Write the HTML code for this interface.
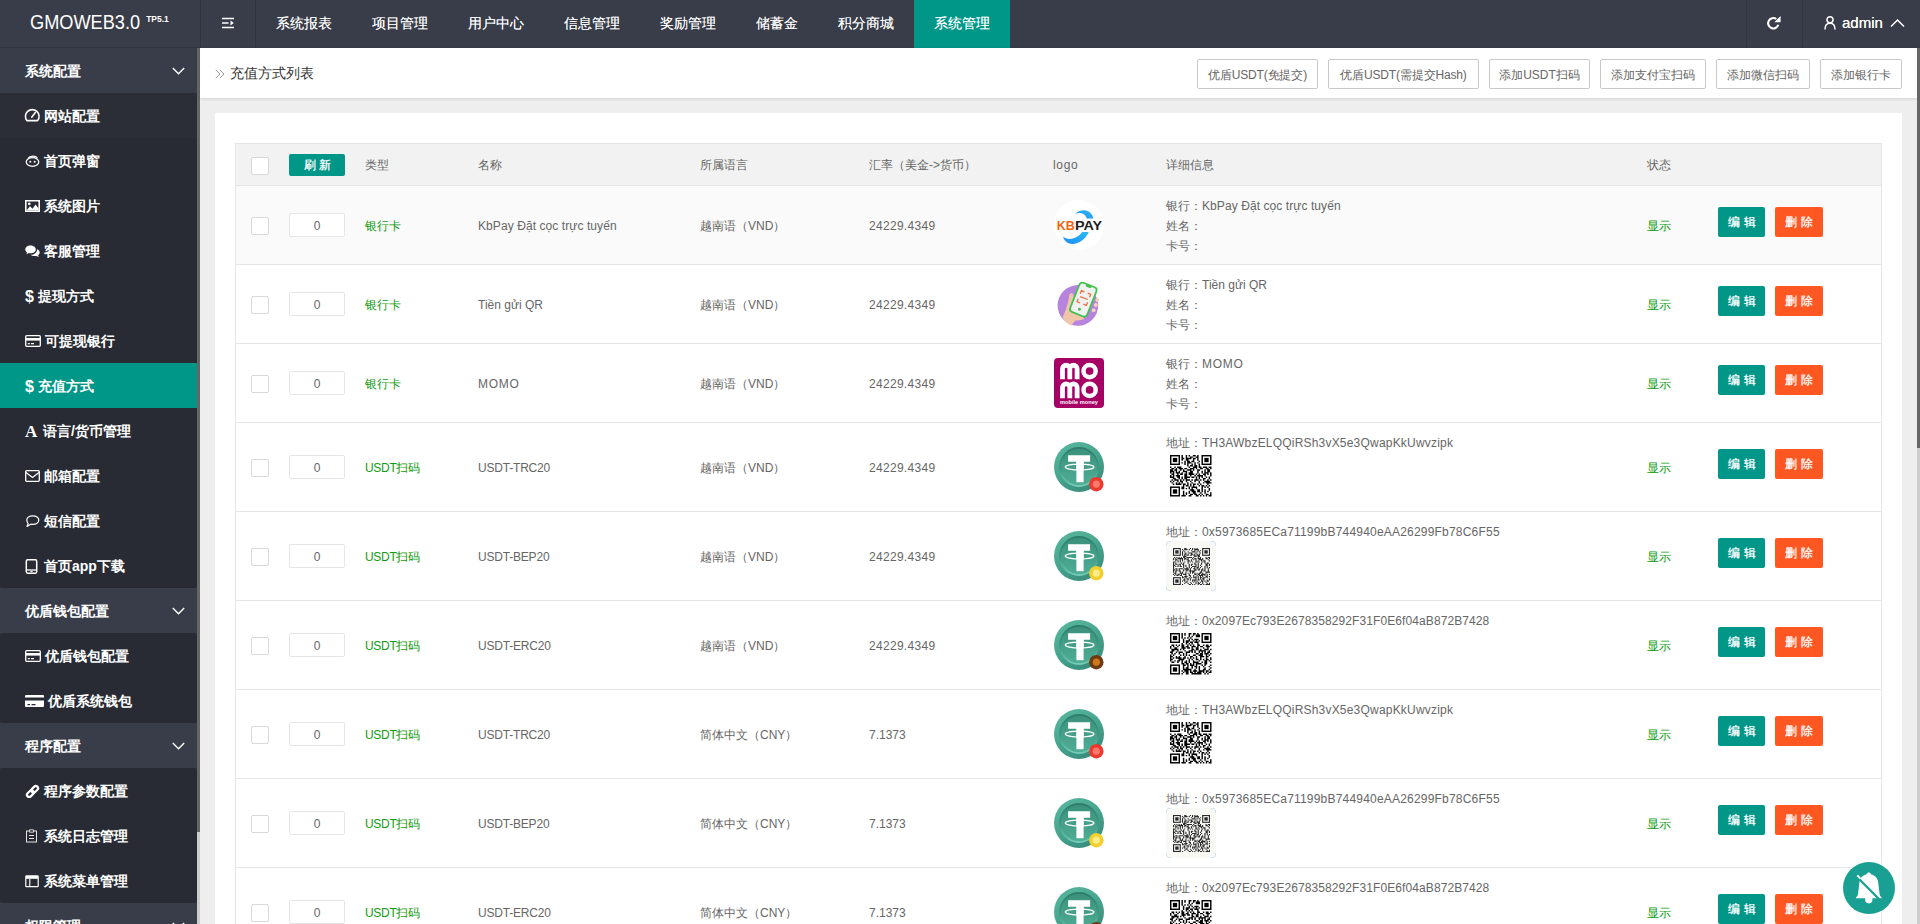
<!DOCTYPE html>
<html lang="zh">
<head>
<meta charset="utf-8">
<title>GMOWEB3.0</title>
<style>
*{box-sizing:border-box;margin:0;padding:0}
html,body{width:1920px;height:924px;overflow:hidden;background:#eee;font-family:"Liberation Sans",sans-serif;font-size:14px;color:#666}
.abs{position:absolute}
#hdr{position:absolute;left:0;top:0;width:1920px;height:48px;background:#393d49}
#logo{position:absolute;left:30px;top:7px;height:30px;line-height:30px;color:#fff;font-size:20.500px;white-space:nowrap;transform:scaleX(.887);transform-origin:0 0}
#logo sup{position:absolute;left:131px;top:-3px;font-size:9.500px;font-weight:bold;letter-spacing:0}
.vdiv{position:absolute;top:0;width:1px;height:48px;background:#30343f}
.nav{position:absolute;top:0;height:48px;line-height:47px;color:#fff;font-size:14px;text-align:center;white-space:nowrap;text-shadow:0 0 .5px rgba(255,255,255,.7)}
.nav.on{background:#009688}
#side{position:absolute;left:0;top:48px;width:197px;height:876px;background:#393d49;overflow:hidden}
#sbar{position:absolute;left:197px;top:48px;width:3px;height:876px;background:#ccc}
#sbar i{position:absolute;left:0;top:0;width:3px;height:784px;background:#666}
.grp{position:relative;height:45px;line-height:47px;color:#fff;font-size:14px;padding-left:25px;background:#393d49;font-weight:bold}
.grp svg{position:absolute;left:172px;top:19px}
.sub{background:#282b33;border-radius:2px}
.it{position:relative;height:45px;line-height:47px;color:#fff;font-size:14px;font-weight:bold;white-space:nowrap}
.it.on{background:#009688}
.it span{position:absolute;top:0}
.it svg{position:absolute;left:25px;top:16px}
#sub{position:absolute;left:200px;top:48px;width:1717px;height:50px;background:#fff;box-shadow:0 1px 3px rgba(0,0,0,.12)}
#crumb{position:absolute;left:30px;top:0;line-height:50px;font-size:14px;color:#333}
.tb{position:absolute;top:11px;height:30px;line-height:30px;border:1px solid #c9c9c9;border-radius:2px;background:#fff;color:#666;font-size:12px;text-align:center;white-space:nowrap}
#card{position:absolute;left:215px;top:113px;width:1687px;height:900px;background:#fff}
#tbl{position:absolute;left:20px;top:30px;width:1647px;border:1px solid #e6e6e6;border-bottom:0;font-size:12px;color:#666}
.row{position:relative;width:1645px;border-bottom:1px solid #e6e6e6;background:#fff}
.row.h{height:42px;background:#f2f2f2}
.row.b{height:79px}
.row.u{height:89px}
.row.hov{background:#fafafa}
.c{position:absolute;white-space:nowrap;line-height:20px}
.ck{position:absolute;left:15px;width:18px;height:18px;border:1px solid #d8d8d8;border-radius:2px;background:#fff}
.inp{position:absolute;left:53px;width:56px;height:24px;line-height:24px;border:1px solid #e6e6e6;border-radius:2px;background:#fff;text-align:center;color:#666}
.g{color:#109c10}
.l{letter-spacing:.22px}
.btn{position:absolute;height:30px;line-height:30px;border-radius:2px;color:#fff;font-size:12px;text-align:center;letter-spacing:4px;padding-left:4px;text-shadow:0 0 .7px rgba(255,255,255,.9)}
.be{left:1482px;width:47px;background:#009688}
.bd{left:1539px;width:48px;background:#ff5722}
#vs{position:absolute;left:1917px;top:48px;width:3px;height:876px;background:#ccc}
#vs i{position:absolute;left:0;top:0;width:3px;height:400px;background:#666}
#bell{position:absolute;left:1843px;top:862px;width:52px;height:52px;border-radius:50%;background:#19a092}
</style>
</head>
<body>
<div id="hdr">
  <div id="logo">GMOWEB3.0<sup>TP5.1</sup></div>
  <div class="abs" style="left:0;top:47px;width:200px;height:1px;background:#30343f"></div>
  <div class="vdiv" style="left:200px"></div>
  <div class="vdiv" style="left:255px"></div>
  <div class="vdiv" style="left:1746px"></div>
  <div class="vdiv" style="left:1802px"></div>
  <svg class="abs" style="left:221px;top:16px" width="14" height="14" viewBox="0 0 14 14"><path d="M1 2.5h12M1 7h6.5M1 11.5h12" stroke="#fff" stroke-width="1.6" fill="none"/><path d="M9.5 4.6L12.8 7L9.5 9.4z" fill="#fff"/></svg>
  <div class="nav" style="left:256px;width:96px">系统报表</div>
  <div class="nav" style="left:352px;width:96px">项目管理</div>
  <div class="nav" style="left:448px;width:96px">用户中心</div>
  <div class="nav" style="left:544px;width:96px">信息管理</div>
  <div class="nav" style="left:640px;width:96px">奖励管理</div>
  <div class="nav" style="left:736px;width:82px">储蓄金</div>
  <div class="nav" style="left:818px;width:96px">积分商城</div>
  <div class="nav on" style="left:914px;width:96px">系统管理</div>
  <svg class="abs" style="left:1766px;top:15px" width="16" height="16" viewBox="0 0 16 16"><path d="M12.300 9.800A5.200 5.200 0 1 1 10.300 4" stroke="#fff" stroke-width="2.100" fill="none"/><path d="M14.600 1v6.300H8.300z" fill="#fff"/></svg>
  <svg class="abs" style="left:1823px;top:15px" width="14" height="16" viewBox="0 0 14 16"><circle cx="7" cy="4.700" r="3" stroke="#fff" stroke-width="1.500" fill="none"/><path d="M2 14.500c0-3.800 2-6.200 5-6.200s5 2.400 5 6.200" stroke="#fff" stroke-width="1.500" fill="none"/></svg>
  <div class="nav" style="left:1842px;font-size:15px;line-height:45px;text-shadow:0 0 .6px #fff">admin</div>
  <svg class="abs" style="left:1890px;top:18px" width="15" height="10" viewBox="0 0 15 10"><path d="M1 8.500L7.500 2L14 8.500" stroke="#fff" stroke-width="1.5" fill="none"/></svg>
</div>

<div id="side">
<div class="grp">系统配置<svg width="13" height="8" viewBox="0 0 13 8"><path d="M.8 1l5.700 5.700L12.200 1" stroke="#fff" stroke-width="1.400" fill="none"/></svg></div>
<div class="sub">
<div class="it" style="background:#2b2e37"><svg width="16.500" height="15.400" viewBox="0 0 15 14" style="top:14px;left:24px"><path d="M2.600 12.400A6.200 6.200 0 1 1 12.400 12.400z" stroke="#fff" stroke-width="1.400" fill="none" stroke-linejoin="round"/><path d="M7 9.300L10.300 5" stroke="#fff" stroke-width="1.400" stroke-linecap="round"/></svg><span style="left:44px">网站配置</span></div>
<div class="it"><svg width="15" height="14" viewBox="0 0 15 14"><ellipse cx="7.500" cy="8" rx="6.300" ry="4.300" stroke="#fff" stroke-width="1.200" fill="none"/><path d="M3 4.300C5 1.500 10.500 1.500 12.500 4" stroke="#fff" stroke-width="1.200" fill="none"/><circle cx="5.300" cy="7.800" r="1" fill="#fff"/><circle cx="9.700" cy="7.800" r="1" fill="#fff"/></svg><span style="left:44px">首页弹窗</span></div>
<div class="it"><svg width="15" height="14" viewBox="0 0 15 14"><path d="M.8 1.800h13.400v10.400H.8z" stroke="#fff" stroke-width="1.600" fill="none"/><path d="M1.500 11.500l3.500-4.200 2.500 2.500 3-4.300 3 3.800v2.200z" fill="#fff"/><circle cx="4.300" cy="4.800" r="1.400" fill="#fff"/></svg><span style="left:44px">系统图片</span></div>
<div class="it"><svg width="15" height="14" viewBox="0 0 15 14"><path d="M5.500 1.500c3 0 5.300 1.700 5.300 3.900s-2.300 3.900-5.300 3.900c-.6 0-1.200-.1-1.700-.2L1.300 10.300l.8-2C1 7.600.3 6.600.3 5.400.3 3.200 2.500 1.500 5.500 1.500z" fill="#fff"/><path d="M12 5.200c1.600.6 2.700 1.800 2.700 3.200 0 1.100-.7 2.100-1.700 2.800l.8 1.900-2.600-1.200c-.5.100-1.100.2-1.700.2-1.600 0-3-.5-4-1.300 3.600.2 6.700-2 6.500-5.600z" fill="#fff"/></svg><span style="left:44px">客服管理</span></div>
<div class="it"><span style="left:25px;font-size:16px;font-weight:bold">$</span><span style="left:38px">提现方式</span></div>
<div class="it"><svg width="16" height="14" viewBox="0 0 16 14"><rect x=".7" y="1.700" width="14.600" height="10.600" rx="1" stroke="#fff" stroke-width="1.300" fill="none"/><path d="M1 4h14v2.600H1z" fill="#fff"/><path d="M2.800 9.600h2M6 9.600h3" stroke="#fff" stroke-width="1.200"/></svg><span style="left:45px">可提现银行</span></div>
<div class="it on"><span style="left:25px;font-size:16px;font-weight:bold">$</span><span style="left:38px">充值方式</span></div>
<div class="it"><span style="left:25px;font-family:'Liberation Serif',serif;font-size:17px;font-weight:bold">A</span><span style="left:43px">语言/货币管理</span></div>
<div class="it"><svg width="15" height="14" viewBox="0 0 15 14"><rect x=".7" y="1.700" width="13.600" height="10.600" rx="1" stroke="#fff" stroke-width="1.300" fill="none"/><path d="M1 3.500l6.500 5 6.500-5" stroke="#fff" stroke-width="1.300" fill="none"/></svg><span style="left:44px">邮箱配置</span></div>
<div class="it"><svg width="15" height="14" viewBox="0 0 15 14"><path d="M7.800 1.800c3.400 0 6 1.900 6 4.300s-2.600 4.300-6 4.300c-.7 0-1.400-.1-2-.2L2 12.400l1.200-2.800C2.300 8.800 1.800 7.500 1.800 6.100c0-2.400 2.600-4.300 6-4.300z" stroke="#fff" stroke-width="1.200" fill="none" stroke-linejoin="round"/></svg><span style="left:44px">短信配置</span></div>
<div class="it"><svg width="13" height="15" viewBox="0 0 13 15"><rect x="1.300" y=".8" width="10.400" height="13.400" rx="1.400" stroke="#fff" stroke-width="1.500" fill="none"/><path d="M1.500 11h10" stroke="#fff" stroke-width="1.300"/><path d="M5.300 12.600h2.400" stroke="#fff" stroke-width="1"/></svg><span style="left:44px">首页app下载</span></div>
</div>
<div class="grp">优盾钱包配置<svg width="13" height="8" viewBox="0 0 13 8"><path d="M.8 1l5.700 5.700L12.200 1" stroke="#fff" stroke-width="1.400" fill="none"/></svg></div>
<div class="sub">
<div class="it"><svg width="16" height="14" viewBox="0 0 16 14"><rect x=".7" y="1.700" width="14.600" height="10.600" rx="1" stroke="#fff" stroke-width="1.300" fill="none"/><path d="M1 4h14v2.600H1z" fill="#fff"/><path d="M2.800 9.600h2M6 9.600h3" stroke="#fff" stroke-width="1.200"/></svg><span style="left:45px">优盾钱包配置</span></div>
<div class="it"><svg width="19" height="14" viewBox="0 0 19 14"><path d="M1 1h17a1 1 0 0 1 1 1v1.500H0V2a1 1 0 0 1 1-1zM0 6.500h19V12a1 1 0 0 1-1 1H1a1 1 0 0 1-1-1zM2.500 10h2.500v1.200H2.500zM6.500 10h4v1.200h-4z" fill="#fff" fill-rule="evenodd"/></svg><span style="left:48px">优盾系统钱包</span></div>
</div>
<div class="grp">程序配置<svg width="13" height="8" viewBox="0 0 13 8"><path d="M.8 1l5.700 5.700L12.200 1" stroke="#fff" stroke-width="1.400" fill="none"/></svg></div>
<div class="sub">
<div class="it"><svg width="15" height="15" viewBox="0 0 15 15"><g fill="none" stroke="#fff" stroke-width="2.200" transform="rotate(-45 7.500 7.500)"><rect x=".6" y="5.300" width="7.600" height="4.400" rx="2.200"/><rect x="6.800" y="5.300" width="7.600" height="4.400" rx="2.200"/></g></svg><span style="left:44px">程序参数配置</span></div>
<div class="it"><svg width="13" height="15" viewBox="0 0 13 15"><rect x="1.500" y="2" width="10" height="11" stroke="#e4e4e4" stroke-width="1" fill="none"/><path d="M4.500 .8h4v2.400h-4z" stroke="#e4e4e4" stroke-width=".9" fill="#282b33"/><path d="M4 6.500h5M4 9.500h5" stroke="#e4e4e4" stroke-width="1"/></svg><span style="left:44px">系统日志管理</span></div>
<div class="it"><svg width="14" height="14" viewBox="0 0 14 14"><rect x=".8" y="1.800" width="12.400" height="10.900" rx=".8" stroke="#fff" stroke-width="1.200" fill="none"/><path d="M1 2h12v2.800H1z" fill="#fff"/><path d="M4.800 5v7.500" stroke="#fff" stroke-width="1.100"/></svg><span style="left:44px">系统菜单管理</span></div>
</div>
<div class="grp">权限管理<svg width="13" height="8" viewBox="0 0 13 8"><path d="M.8 1l5.700 5.700L12.200 1" stroke="#fff" stroke-width="1.400" fill="none"/></svg></div>
</div>
<div id="sbar"><i></i></div>

<div id="sub">
  <svg class="abs" style="left:15px;top:21px" width="10" height="10" viewBox="0 0 10 10"><path d="M.8 .8L5 5L.8 9.200M4.800 .8L9 5L4.800 9.200" stroke="#999" stroke-width="1" fill="none"/></svg>
  <div id="crumb">充值方式列表</div>
  <div class="tb" style="left:997px;width:121px;letter-spacing:-.15px">优盾USDT(免提交)</div>
  <div class="tb" style="left:1128px;width:151px;letter-spacing:-.15px">优盾USDT(需提交Hash)</div>
  <div class="tb" style="left:1289px;width:101px">添加USDT扫码</div>
  <div class="tb" style="left:1400px;width:106px">添加支付宝扫码</div>
  <div class="tb" style="left:1516px;width:94px">添加微信扫码</div>
  <div class="tb" style="left:1620px;width:82px">添加银行卡</div>
</div>

<div id="card">
<div id="tbl">
<div class="row h"><div class="ck" style="top:13px"></div><div class="btn" style="left:53px;top:10px;width:56px;height:22px;line-height:22px;background:#009688;letter-spacing:3px;padding-left:3px">刷新</div><div class="c" style="left:129px;top:11px">类型</div><div class="c" style="left:242px;top:11px">名称</div><div class="c" style="left:464px;top:11px">所属语言</div><div class="c" style="left:633px;top:11px">汇率（美金-&gt;货币）</div><div class="c" style="left:817px;top:11px;letter-spacing:.7px">logo</div><div class="c" style="left:930px;top:11px">详细信息</div><div class="c" style="left:1411px;top:11px">状态</div></div>
<div class="row b hov"><div class="ck" style="top:31px"></div><div class="inp" style="top:27px">0</div><div class="c g" style="left:129px;top:30px">银行卡</div><div class="c" style="left:242px;top:30px"><span style="letter-spacing:0.08px">KbPay Đặt cọc trực tuyến</span></div><div class="c" style="left:464px;top:30px">越南语（VND）</div><div class="c" style="left:633px;top:30px"><span style="letter-spacing:0.3px">24229.4349</span></div><div class="abs" style="left:818px;top:14px;width:50px;height:50px"><svg width="50" height="50" viewBox="0 0 50 50"><defs><linearGradient id="kbg" x1="0" y1="1" x2="1" y2="0"><stop offset="0" stop-color="#1c8ef6"/><stop offset="1" stop-color="#2fbaf5"/></linearGradient></defs><circle cx="25" cy="25" r="25" fill="#fff"/><path d="M21 14.200C24.500 10 31.500 9 35.500 12c2.300 1.700 3.500 4 3.800 6.600h-6.600c-.4-2.400-2-4.400-4.500-5.200-2.300-.7-4.800-.3-7.200.8z" fill="url(#kbg)"/><path d="M9 36.500c2.500 2.300 6.500 3 10.500 1.800 3.800-1.100 6.800-3.400 8.700-6.300h6.600c-2 5-6.600 9.500-12.300 11.300-6 1.900-11.800-.4-13.500-6.800z" fill="url(#kbg)"/><text x="2.700" y="30" font-family="Liberation Sans,sans-serif" font-weight="bold" font-size="12.800" fill="#f4660e" textLength="18" lengthAdjust="spacingAndGlyphs">KB</text><text x="21" y="30" font-family="Liberation Sans,sans-serif" font-weight="bold" font-size="12.800" fill="#1c1c1c" textLength="27.200" lengthAdjust="spacingAndGlyphs">PAY</text></svg></div><div class="c" style="left:930px;top:10px">银行：<span style="letter-spacing:0.08px">KbPay Đặt cọc trực tuyến</span><br>姓名：<br>卡号：</div><div class="c g" style="left:1411px;top:30px">显示</div><div class="btn be" style="top:21px">编辑</div><div class="btn bd" style="top:21px">删除</div></div>
<div class="row b"><div class="ck" style="top:31px"></div><div class="inp" style="top:27px">0</div><div class="c g" style="left:129px;top:30px">银行卡</div><div class="c" style="left:242px;top:30px">Tiền gửi QR</div><div class="c" style="left:464px;top:30px">越南语（VND）</div><div class="c" style="left:633px;top:30px"><span style="letter-spacing:0.3px">24229.4349</span></div><div class="abs" style="left:818px;top:14px;width:50px;height:50px"><svg width="50" height="50" viewBox="0 0 50 50"><circle cx="23.900" cy="26.400" r="20.300" fill="#b684dc"/><path d="M15.500 15c1.500-1.200 3.500-.8 4 1l3 16 8 7.500c-2 1.500-6 2-9 2l-4.500 5c-3.500-1.500-6.500-4.500-8.500-8 3-6 5.500-13 7-23.500z" fill="#f1c5aa"/><circle cx="43.300" cy="21" r="1.900" fill="#f6d3bd"/><circle cx="41.800" cy="26" r="1.900" fill="#f6d3bd"/><circle cx="39.700" cy="31.200" r="1.900" fill="#f6d3bd"/><g transform="rotate(21.500 29.300 20.600)"><rect x="19.300" y="4.100" width="20" height="33" rx="4" fill="#3ec24c"/><rect x="21" y="5.800" width="16.600" height="29.600" rx="2.800" fill="#f1f1f1"/><rect x="26.300" y="4.800" width="6" height="2.600" rx="1.300" fill="#3ec24c"/><path d="M24.300 16.200v-3.200h3.200M34.300 16.200v-3.200h-3.200M24.300 21.600v3.200h3.200M34.300 21.600v3.200h-3.200M25.300 18.900h8" stroke="#f0703f" stroke-width="1.300" fill="none"/><circle cx="29.300" cy="31" r="1.500" fill="#3ec24c"/></g></svg></div><div class="c" style="left:930px;top:10px">银行：Tiền gửi QR<br>姓名：<br>卡号：</div><div class="c g" style="left:1411px;top:30px">显示</div><div class="btn be" style="top:21px">编辑</div><div class="btn bd" style="top:21px">删除</div></div>
<div class="row b"><div class="ck" style="top:31px"></div><div class="inp" style="top:27px">0</div><div class="c g" style="left:129px;top:30px">银行卡</div><div class="c" style="left:242px;top:30px"><span style="letter-spacing:0.7px">MOMO</span></div><div class="c" style="left:464px;top:30px">越南语（VND）</div><div class="c" style="left:633px;top:30px"><span style="letter-spacing:0.3px">24229.4349</span></div><div class="abs" style="left:818px;top:14px;width:50px;height:50px"><svg width="50" height="50" viewBox="0 0 50 50"><rect width="50" height="50" rx="4" fill="#a60064"/><path d="M8.500 21.200V10.900a3.650 3.650 0 0 1 7.300 0V21.200M15.800 10.900a3.650 3.650 0 0 1 7.300 0V21.200" stroke="#fff" stroke-width="4.800" fill="none"/><circle cx="35.600" cy="13.100" r="6.100" stroke="#fff" stroke-width="4.500" fill="none"/><path d="M8.500 40.200V29.500a3.650 3.650 0 0 1 7.300 0V40.200M15.800 29.500a3.650 3.650 0 0 1 7.300 0V40.200" stroke="#fff" stroke-width="4.800" fill="none"/><circle cx="35.600" cy="31.900" r="6.100" stroke="#fff" stroke-width="4.500" fill="none"/><text x="6" y="45.600" font-family="Liberation Sans,sans-serif" font-weight="bold" font-size="4.600" fill="#fff" textLength="38" lengthAdjust="spacingAndGlyphs">mobile money</text></svg></div><div class="c" style="left:930px;top:10px">银行：<span style="letter-spacing:0.7px">MOMO</span><br>姓名：<br>卡号：</div><div class="c g" style="left:1411px;top:30px">显示</div><div class="btn be" style="top:21px">编辑</div><div class="btn bd" style="top:21px">删除</div></div>
<div class="row u"><div class="ck" style="top:36px"></div><div class="inp" style="top:32px">0</div><div class="c g" style="left:129px;top:35px"><span style="letter-spacing:-.3px">USDT</span>扫码</div><div class="c" style="left:242px;top:35px"><span style="letter-spacing:-0.2px">USDT-TRC20</span></div><div class="c" style="left:464px;top:35px">越南语（VND）</div><div class="c" style="left:633px;top:35px"><span style="letter-spacing:0.3px">24229.4349</span></div><div class="abs" style="left:818px;top:19px;width:50px;height:50px"><svg width="50" height="50" viewBox="0 0 50 50"><defs><linearGradient id="ugr1" x1=".2" y1="0" x2=".8" y2="1"><stop offset="0" stop-color="#58b69e"/><stop offset=".5" stop-color="#46a48d"/><stop offset="1" stop-color="#36897a"/></linearGradient><linearGradient id="udr1" x1="0" y1="0" x2="0" y2="1"><stop offset="0" stop-color="#3b907b"/><stop offset="1" stop-color="#4fae96"/></linearGradient><linearGradient id="usr1" x1="0" y1="0" x2="0" y2="1"><stop offset="0" stop-color="#2d7f6b"/><stop offset=".55" stop-color="#3f9a84"/><stop offset="1" stop-color="#74cdb6"/></linearGradient></defs><circle cx="25" cy="25" r="25" fill="url(#ugr1)"/><circle cx="25" cy="25" r="19" fill="url(#udr1)" stroke="url(#usr1)" stroke-width="1.800"/><path d="M14.100 13.300h22v6.400h-6.500v20.500h-7.200v-20.500h-8.300z" fill="#fff"/><ellipse cx="25.600" cy="25" rx="14.300" ry="2.900" fill="none" stroke="#fff" stroke-width="1.300"/><path d="M22.400 19h7.200v8.500h-7.200z" fill="#fff"/><circle cx="42.300" cy="42.200" r="7.200" fill="#ee3a2e"/><circle cx="42.300" cy="42.200" r="3.600" fill="#ff8a7a" opacity=".8"/></svg></div><div class="c" style="left:930px;top:10px">地址：<span style="letter-spacing:0.2px">TH3AWbzELQQiRSh3vX5e3QwapKkUwvzipk</span></div><div class="abs" style="left:930px;top:28px;width:50px;height:50px;padding:4.250px"><svg width="41.5" height="41.5" viewBox="0 0 29 29" style="display:block"><path d="M8 0h1v1h-1zM11 0h1v1h-1zM13 0h1v1h-1zM16 0h2v1h-2zM19 0h1v1h-1zM8 1h1v1h-1zM11 1h1v1h-1zM14 1h2v1h-2zM18 1h2v1h-2zM8 2h2v1h-2zM11 2h4v1h-4zM16 2h2v1h-2zM19 2h1v1h-1zM8 3h1v1h-1zM11 3h2v1h-2zM16 3h1v1h-1zM19 3h1v1h-1zM10 4h1v1h-1zM12 4h2v1h-2zM15 4h2v1h-2zM20 4h1v1h-1zM8 5h1v1h-1zM10 5h1v1h-1zM12 5h3v1h-3zM17 5h1v1h-1zM19 5h1v1h-1zM10 6h1v1h-1zM12 6h1v1h-1zM15 6h1v1h-1zM17 6h1v1h-1zM20 6h1v1h-1zM12 7h1v1h-1zM14 7h2v1h-2zM17 7h2v1h-2zM20 7h1v1h-1zM0 8h1v1h-1zM3 8h1v1h-1zM5 8h3v1h-3zM13 8h1v1h-1zM16 8h3v1h-3zM20 8h2v1h-2zM23 8h3v1h-3zM27 8h2v1h-2zM1 9h2v1h-2zM4 9h1v1h-1zM6 9h3v1h-3zM10 9h2v1h-2zM14 9h3v1h-3zM18 9h1v1h-1zM21 9h2v1h-2zM25 9h2v1h-2zM28 9h1v1h-1zM0 10h2v1h-2zM3 10h2v1h-2zM7 10h1v1h-1zM9 10h1v1h-1zM12 10h3v1h-3zM16 10h1v1h-1zM19 10h2v1h-2zM24 10h1v1h-1zM26 10h2v1h-2zM0 11h3v1h-3zM4 11h1v1h-1zM6 11h1v1h-1zM9 11h3v1h-3zM14 11h2v1h-2zM19 11h1v1h-1zM22 11h1v1h-1zM24 11h1v1h-1zM26 11h2v1h-2zM0 12h1v1h-1zM2 12h1v1h-1zM4 12h3v1h-3zM8 12h1v1h-1zM11 12h1v1h-1zM13 12h3v1h-3zM19 12h1v1h-1zM22 12h1v1h-1zM24 12h3v1h-3zM28 12h1v1h-1zM1 13h2v1h-2zM5 13h1v1h-1zM7 13h2v1h-2zM10 13h2v1h-2zM13 13h4v1h-4zM18 13h1v1h-1zM20 13h1v1h-1zM23 13h2v1h-2zM26 13h1v1h-1zM28 13h1v1h-1zM0 14h1v1h-1zM2 14h1v1h-1zM4 14h3v1h-3zM10 14h2v1h-2zM14 14h1v1h-1zM17 14h1v1h-1zM19 14h4v1h-4zM24 14h1v1h-1zM28 14h1v1h-1zM0 15h3v1h-3zM5 15h2v1h-2zM8 15h1v1h-1zM10 15h4v1h-4zM15 15h2v1h-2zM18 15h1v1h-1zM20 15h1v1h-1zM22 15h1v1h-1zM25 15h1v1h-1zM27 15h1v1h-1zM2 16h2v1h-2zM6 16h1v1h-1zM8 16h1v1h-1zM10 16h2v1h-2zM18 16h1v1h-1zM20 16h1v1h-1zM23 16h2v1h-2zM27 16h1v1h-1zM1 17h1v1h-1zM3 17h3v1h-3zM7 17h1v1h-1zM9 17h1v1h-1zM11 17h3v1h-3zM15 17h1v1h-1zM17 17h3v1h-3zM21 17h1v1h-1zM23 17h1v1h-1zM26 17h1v1h-1zM28 17h1v1h-1zM0 18h1v1h-1zM2 18h1v1h-1zM5 18h1v1h-1zM7 18h2v1h-2zM11 18h1v1h-1zM14 18h1v1h-1zM17 18h1v1h-1zM20 18h1v1h-1zM24 18h4v1h-4zM1 19h1v1h-1zM4 19h1v1h-1zM6 19h1v1h-1zM8 19h1v1h-1zM12 19h1v1h-1zM15 19h1v1h-1zM20 19h1v1h-1zM23 19h1v1h-1zM25 19h4v1h-4zM2 20h1v1h-1zM4 20h4v1h-4zM9 20h2v1h-2zM12 20h1v1h-1zM14 20h1v1h-1zM16 20h2v1h-2zM19 20h1v1h-1zM21 20h1v1h-1zM26 20h1v1h-1zM9 21h1v1h-1zM11 21h2v1h-2zM14 21h1v1h-1zM16 21h1v1h-1zM20 21h1v1h-1zM22 21h2v1h-2zM25 21h1v1h-1zM27 21h1v1h-1zM8 22h2v1h-2zM13 22h1v1h-1zM15 22h4v1h-4zM22 22h1v1h-1zM24 22h1v1h-1zM26 22h1v1h-1zM8 23h2v1h-2zM11 23h1v1h-1zM13 23h1v1h-1zM15 23h1v1h-1zM18 23h1v1h-1zM22 23h1v1h-1zM27 23h1v1h-1zM14 24h3v1h-3zM19 24h2v1h-2zM22 24h1v1h-1zM24 24h1v1h-1zM27 24h1v1h-1zM9 25h1v1h-1zM13 25h1v1h-1zM15 25h3v1h-3zM19 25h2v1h-2zM22 25h1v1h-1zM24 25h1v1h-1zM26 25h1v1h-1zM9 26h1v1h-1zM11 26h1v1h-1zM13 26h1v1h-1zM16 26h2v1h-2zM21 26h1v1h-1zM24 26h1v1h-1zM28 26h1v1h-1zM9 27h1v1h-1zM11 27h1v1h-1zM14 27h2v1h-2zM17 27h2v1h-2zM20 27h1v1h-1zM22 27h1v1h-1zM25 27h2v1h-2zM28 27h1v1h-1zM8 28h3v1h-3zM13 28h2v1h-2zM18 28h2v1h-2zM21 28h1v1h-1zM23 28h1v1h-1zM25 28h1v1h-1zM27 28h2v1h-2z" fill="#000"/><rect x="0" y="0" width="7" height="7" fill="#000"/><rect x="1" y="1" width="5" height="5" fill="#fff"/><rect x="2" y="2" width="3" height="3" fill="#000"/><rect x="22" y="0" width="7" height="7" fill="#000"/><rect x="23" y="1" width="5" height="5" fill="#fff"/><rect x="24" y="2" width="3" height="3" fill="#000"/><rect x="0" y="22" width="7" height="7" fill="#000"/><rect x="1" y="23" width="5" height="5" fill="#fff"/><rect x="2" y="24" width="3" height="3" fill="#000"/></svg></div><div class="c g" style="left:1411px;top:35px">显示</div><div class="btn be" style="top:26px">编辑</div><div class="btn bd" style="top:26px">删除</div></div>
<div class="row u"><div class="ck" style="top:36px"></div><div class="inp" style="top:32px">0</div><div class="c g" style="left:129px;top:35px"><span style="letter-spacing:-.3px">USDT</span>扫码</div><div class="c" style="left:242px;top:35px"><span style="letter-spacing:-0.2px">USDT-BEP20</span></div><div class="c" style="left:464px;top:35px">越南语（VND）</div><div class="c" style="left:633px;top:35px"><span style="letter-spacing:0.3px">24229.4349</span></div><div class="abs" style="left:818px;top:19px;width:50px;height:50px"><svg width="50" height="50" viewBox="0 0 50 50"><defs><linearGradient id="ugy2" x1=".2" y1="0" x2=".8" y2="1"><stop offset="0" stop-color="#58b69e"/><stop offset=".5" stop-color="#46a48d"/><stop offset="1" stop-color="#36897a"/></linearGradient><linearGradient id="udy2" x1="0" y1="0" x2="0" y2="1"><stop offset="0" stop-color="#3b907b"/><stop offset="1" stop-color="#4fae96"/></linearGradient><linearGradient id="usy2" x1="0" y1="0" x2="0" y2="1"><stop offset="0" stop-color="#2d7f6b"/><stop offset=".55" stop-color="#3f9a84"/><stop offset="1" stop-color="#74cdb6"/></linearGradient></defs><circle cx="25" cy="25" r="25" fill="url(#ugy2)"/><circle cx="25" cy="25" r="19" fill="url(#udy2)" stroke="url(#usy2)" stroke-width="1.800"/><path d="M14.100 13.300h22v6.400h-6.500v20.500h-7.200v-20.500h-8.300z" fill="#fff"/><ellipse cx="25.600" cy="25" rx="14.300" ry="2.900" fill="none" stroke="#fff" stroke-width="1.300"/><path d="M22.400 19h7.200v8.500h-7.200z" fill="#fff"/><circle cx="42.300" cy="42.200" r="7.200" fill="#f2cf2c"/><circle cx="42.300" cy="42.200" r="3.600" fill="#fff3a0" opacity=".8"/></svg></div><div class="c" style="left:930px;top:10px">地址：<span style="letter-spacing:0.2px">0x5973685ECa71199bB744940eAA26299Fb78C6F55</span></div><div class="abs" style="left:930px;top:29px;width:50px;height:50px;padding:6.500px;background:#f8f8f5;border-radius:3px"><svg width="37" height="37" viewBox="0 0 33 33" style="display:block"><path d="M10 0h2v1h-2zM15 0h1v1h-1zM17 0h1v1h-1zM19 0h1v1h-1zM21 0h1v1h-1zM8 1h1v1h-1zM10 1h3v1h-3zM14 1h1v1h-1zM17 1h1v1h-1zM19 1h4v1h-4zM9 2h1v1h-1zM16 2h1v1h-1zM19 2h1v1h-1zM22 2h1v1h-1zM24 2h1v1h-1zM8 3h1v1h-1zM10 3h1v1h-1zM13 3h1v1h-1zM17 3h3v1h-3zM21 3h1v1h-1zM23 3h1v1h-1zM8 4h1v1h-1zM11 4h1v1h-1zM14 4h3v1h-3zM20 4h1v1h-1zM24 4h1v1h-1zM8 5h1v1h-1zM10 5h2v1h-2zM13 5h1v1h-1zM16 5h2v1h-2zM19 5h1v1h-1zM21 5h1v1h-1zM23 5h1v1h-1zM8 6h1v1h-1zM10 6h1v1h-1zM12 6h2v1h-2zM15 6h2v1h-2zM18 6h2v1h-2zM21 6h3v1h-3zM9 7h3v1h-3zM19 7h2v1h-2zM22 7h2v1h-2zM1 8h1v1h-1zM3 8h1v1h-1zM5 8h1v1h-1zM7 8h1v1h-1zM9 8h2v1h-2zM12 8h5v1h-5zM18 8h1v1h-1zM22 8h1v1h-1zM24 8h1v1h-1zM29 8h1v1h-1zM31 8h2v1h-2zM0 9h1v1h-1zM2 9h1v1h-1zM4 9h5v1h-5zM10 9h2v1h-2zM13 9h1v1h-1zM17 9h1v1h-1zM19 9h2v1h-2zM22 9h3v1h-3zM26 9h1v1h-1zM29 9h2v1h-2zM32 9h1v1h-1zM0 10h1v1h-1zM2 10h2v1h-2zM6 10h1v1h-1zM8 10h1v1h-1zM10 10h1v1h-1zM12 10h2v1h-2zM16 10h1v1h-1zM18 10h1v1h-1zM20 10h1v1h-1zM23 10h4v1h-4zM31 10h1v1h-1zM2 11h1v1h-1zM4 11h1v1h-1zM6 11h1v1h-1zM8 11h1v1h-1zM13 11h2v1h-2zM16 11h1v1h-1zM20 11h1v1h-1zM22 11h1v1h-1zM25 11h1v1h-1zM27 11h2v1h-2zM32 11h1v1h-1zM0 12h2v1h-2zM4 12h1v1h-1zM6 12h1v1h-1zM10 12h1v1h-1zM13 12h1v1h-1zM15 12h1v1h-1zM17 12h1v1h-1zM20 12h2v1h-2zM23 12h1v1h-1zM26 12h1v1h-1zM28 12h1v1h-1zM0 13h1v1h-1zM2 13h1v1h-1zM7 13h1v1h-1zM9 13h1v1h-1zM13 13h1v1h-1zM19 13h1v1h-1zM22 13h1v1h-1zM25 13h1v1h-1zM28 13h1v1h-1zM30 13h2v1h-2zM0 14h1v1h-1zM2 14h2v1h-2zM5 14h2v1h-2zM8 14h2v1h-2zM14 14h1v1h-1zM16 14h2v1h-2zM19 14h2v1h-2zM22 14h1v1h-1zM25 14h1v1h-1zM29 14h2v1h-2zM32 14h1v1h-1zM0 15h2v1h-2zM4 15h1v1h-1zM6 15h1v1h-1zM9 15h1v1h-1zM11 15h1v1h-1zM14 15h1v1h-1zM16 15h1v1h-1zM20 15h1v1h-1zM22 15h1v1h-1zM24 15h1v1h-1zM29 15h2v1h-2zM32 15h1v1h-1zM0 16h1v1h-1zM2 16h1v1h-1zM4 16h1v1h-1zM6 16h2v1h-2zM9 16h1v1h-1zM11 16h1v1h-1zM14 16h1v1h-1zM17 16h4v1h-4zM22 16h1v1h-1zM25 16h1v1h-1zM28 16h1v1h-1zM30 16h1v1h-1zM0 17h1v1h-1zM9 17h1v1h-1zM12 17h1v1h-1zM14 17h1v1h-1zM16 17h1v1h-1zM19 17h1v1h-1zM21 17h2v1h-2zM24 17h1v1h-1zM28 17h1v1h-1zM30 17h1v1h-1zM32 17h1v1h-1zM0 18h1v1h-1zM2 18h2v1h-2zM5 18h4v1h-4zM10 18h4v1h-4zM15 18h1v1h-1zM18 18h2v1h-2zM21 18h1v1h-1zM23 18h1v1h-1zM26 18h1v1h-1zM28 18h1v1h-1zM31 18h1v1h-1zM0 19h2v1h-2zM3 19h1v1h-1zM5 19h1v1h-1zM9 19h1v1h-1zM11 19h3v1h-3zM15 19h1v1h-1zM19 19h2v1h-2zM22 19h2v1h-2zM25 19h2v1h-2zM28 19h1v1h-1zM31 19h1v1h-1zM0 20h1v1h-1zM2 20h2v1h-2zM5 20h2v1h-2zM9 20h1v1h-1zM12 20h1v1h-1zM14 20h6v1h-6zM25 20h1v1h-1zM27 20h2v1h-2zM31 20h1v1h-1zM0 21h1v1h-1zM2 21h1v1h-1zM6 21h1v1h-1zM8 21h1v1h-1zM11 21h1v1h-1zM15 21h1v1h-1zM17 21h2v1h-2zM24 21h2v1h-2zM29 21h4v1h-4zM1 22h2v1h-2zM6 22h3v1h-3zM11 22h1v1h-1zM13 22h1v1h-1zM15 22h1v1h-1zM17 22h1v1h-1zM19 22h1v1h-1zM21 22h1v1h-1zM23 22h2v1h-2zM26 22h1v1h-1zM29 22h1v1h-1zM0 23h1v1h-1zM2 23h1v1h-1zM4 23h2v1h-2zM7 23h1v1h-1zM9 23h3v1h-3zM14 23h1v1h-1zM19 23h2v1h-2zM22 23h2v1h-2zM25 23h4v1h-4zM30 23h1v1h-1zM32 23h1v1h-1zM1 24h1v1h-1zM3 24h2v1h-2zM6 24h2v1h-2zM11 24h1v1h-1zM14 24h2v1h-2zM18 24h1v1h-1zM21 24h1v1h-1zM23 24h4v1h-4zM28 24h1v1h-1zM30 24h1v1h-1zM8 25h1v1h-1zM10 25h3v1h-3zM15 25h1v1h-1zM18 25h1v1h-1zM20 25h1v1h-1zM22 25h1v1h-1zM24 25h1v1h-1zM26 25h1v1h-1zM29 25h2v1h-2zM32 25h1v1h-1zM8 26h2v1h-2zM11 26h1v1h-1zM14 26h1v1h-1zM16 26h1v1h-1zM18 26h3v1h-3zM22 26h1v1h-1zM24 26h2v1h-2zM27 26h2v1h-2zM30 26h1v1h-1zM10 27h1v1h-1zM12 27h2v1h-2zM15 27h1v1h-1zM20 27h1v1h-1zM22 27h1v1h-1zM24 27h1v1h-1zM26 27h2v1h-2zM32 27h1v1h-1zM9 28h2v1h-2zM13 28h1v1h-1zM15 28h1v1h-1zM17 28h4v1h-4zM22 28h2v1h-2zM25 28h1v1h-1zM27 28h1v1h-1zM30 28h1v1h-1zM32 28h1v1h-1zM8 29h1v1h-1zM10 29h1v1h-1zM12 29h1v1h-1zM17 29h1v1h-1zM19 29h1v1h-1zM21 29h1v1h-1zM25 29h2v1h-2zM28 29h1v1h-1zM30 29h2v1h-2zM11 30h2v1h-2zM15 30h1v1h-1zM18 30h1v1h-1zM20 30h1v1h-1zM22 30h1v1h-1zM24 30h1v1h-1zM26 30h1v1h-1zM29 30h1v1h-1zM10 31h1v1h-1zM13 31h1v1h-1zM16 31h1v1h-1zM20 31h1v1h-1zM22 31h2v1h-2zM26 31h1v1h-1zM30 31h1v1h-1zM32 31h1v1h-1zM8 32h1v1h-1zM14 32h2v1h-2zM17 32h1v1h-1zM19 32h1v1h-1zM22 32h1v1h-1zM24 32h2v1h-2zM27 32h1v1h-1zM29 32h4v1h-4z" fill="#2a2a2a"/><rect x="0" y="0" width="7" height="7" fill="#2a2a2a"/><rect x="1" y="1" width="5" height="5" fill="#fff"/><rect x="2" y="2" width="3" height="3" fill="#2a2a2a"/><rect x="26" y="0" width="7" height="7" fill="#2a2a2a"/><rect x="27" y="1" width="5" height="5" fill="#fff"/><rect x="28" y="2" width="3" height="3" fill="#2a2a2a"/><rect x="0" y="26" width="7" height="7" fill="#2a2a2a"/><rect x="1" y="27" width="5" height="5" fill="#fff"/><rect x="2" y="28" width="3" height="3" fill="#2a2a2a"/></svg><svg class="abs" style="left:0;top:0" width="50" height="50" viewBox="0 0 50 50"><path d="M.5 5V3a2.500 2.500 0 0 1 2.500-2.500h2M45 .5h2a2.500 2.500 0 0 1 2.500 2.500v2M49.500 45v2a2.500 2.500 0 0 1-2.500 2.500h-2M5 49.500H3a2.500 2.500 0 0 1-2.500-2.500v-2" stroke="#cfe6f2" stroke-width="1" fill="none"/></svg></div><div class="c g" style="left:1411px;top:35px">显示</div><div class="btn be" style="top:26px">编辑</div><div class="btn bd" style="top:26px">删除</div></div>
<div class="row u"><div class="ck" style="top:36px"></div><div class="inp" style="top:32px">0</div><div class="c g" style="left:129px;top:35px"><span style="letter-spacing:-.3px">USDT</span>扫码</div><div class="c" style="left:242px;top:35px"><span style="letter-spacing:-0.2px">USDT-ERC20</span></div><div class="c" style="left:464px;top:35px">越南语（VND）</div><div class="c" style="left:633px;top:35px"><span style="letter-spacing:0.3px">24229.4349</span></div><div class="abs" style="left:818px;top:19px;width:50px;height:50px"><svg width="50" height="50" viewBox="0 0 50 50"><defs><linearGradient id="ugo3" x1=".2" y1="0" x2=".8" y2="1"><stop offset="0" stop-color="#58b69e"/><stop offset=".5" stop-color="#46a48d"/><stop offset="1" stop-color="#36897a"/></linearGradient><linearGradient id="udo3" x1="0" y1="0" x2="0" y2="1"><stop offset="0" stop-color="#3b907b"/><stop offset="1" stop-color="#4fae96"/></linearGradient><linearGradient id="uso3" x1="0" y1="0" x2="0" y2="1"><stop offset="0" stop-color="#2d7f6b"/><stop offset=".55" stop-color="#3f9a84"/><stop offset="1" stop-color="#74cdb6"/></linearGradient></defs><circle cx="25" cy="25" r="25" fill="url(#ugo3)"/><circle cx="25" cy="25" r="19" fill="url(#udo3)" stroke="url(#uso3)" stroke-width="1.800"/><path d="M14.100 13.300h22v6.400h-6.500v20.500h-7.200v-20.500h-8.300z" fill="#fff"/><ellipse cx="25.600" cy="25" rx="14.300" ry="2.900" fill="none" stroke="#fff" stroke-width="1.300"/><path d="M22.400 19h7.200v8.500h-7.200z" fill="#fff"/><circle cx="42.300" cy="42.200" r="7.200" fill="#6e3a12"/><circle cx="42.300" cy="42.200" r="3.600" fill="#e58a1c" opacity=".8"/></svg></div><div class="c" style="left:930px;top:10px">地址：<span style="letter-spacing:0.09px">0x2097Ec793E2678358292F31F0E6f04aB872B7428</span></div><div class="abs" style="left:930px;top:28px;width:50px;height:50px;padding:4.250px"><svg width="41.5" height="41.5" viewBox="0 0 29 29" style="display:block"><path d="M8 0h1v1h-1zM10 0h1v1h-1zM13 0h2v1h-2zM16 0h2v1h-2zM19 0h1v1h-1zM8 1h1v1h-1zM10 1h1v1h-1zM13 1h1v1h-1zM16 1h1v1h-1zM18 1h3v1h-3zM8 2h1v1h-1zM13 2h1v1h-1zM15 2h1v1h-1zM18 2h3v1h-3zM8 3h1v1h-1zM10 3h1v1h-1zM12 3h1v1h-1zM14 3h1v1h-1zM9 4h1v1h-1zM13 4h1v1h-1zM15 4h1v1h-1zM17 4h3v1h-3zM9 5h1v1h-1zM11 5h3v1h-3zM16 5h1v1h-1zM18 5h1v1h-1zM20 5h1v1h-1zM9 6h1v1h-1zM11 6h2v1h-2zM14 6h2v1h-2zM17 6h3v1h-3zM8 7h1v1h-1zM11 7h1v1h-1zM13 7h1v1h-1zM15 7h1v1h-1zM19 7h1v1h-1zM1 8h2v1h-2zM4 8h1v1h-1zM6 8h1v1h-1zM8 8h2v1h-2zM12 8h1v1h-1zM14 8h1v1h-1zM16 8h1v1h-1zM19 8h2v1h-2zM23 8h1v1h-1zM25 8h2v1h-2zM28 8h1v1h-1zM0 9h1v1h-1zM2 9h1v1h-1zM5 9h1v1h-1zM8 9h2v1h-2zM11 9h2v1h-2zM15 9h3v1h-3zM19 9h1v1h-1zM21 9h2v1h-2zM25 9h3v1h-3zM0 10h1v1h-1zM3 10h2v1h-2zM8 10h3v1h-3zM12 10h2v1h-2zM15 10h1v1h-1zM18 10h2v1h-2zM23 10h1v1h-1zM26 10h1v1h-1zM1 11h5v1h-5zM7 11h1v1h-1zM9 11h1v1h-1zM15 11h2v1h-2zM18 11h2v1h-2zM21 11h1v1h-1zM24 11h3v1h-3zM28 11h1v1h-1zM1 12h2v1h-2zM5 12h1v1h-1zM10 12h1v1h-1zM13 12h3v1h-3zM17 12h1v1h-1zM20 12h5v1h-5zM27 12h1v1h-1zM0 13h2v1h-2zM4 13h1v1h-1zM6 13h3v1h-3zM11 13h3v1h-3zM15 13h1v1h-1zM17 13h1v1h-1zM20 13h1v1h-1zM22 13h1v1h-1zM24 13h1v1h-1zM26 13h2v1h-2zM1 14h1v1h-1zM3 14h1v1h-1zM6 14h1v1h-1zM9 14h1v1h-1zM11 14h1v1h-1zM18 14h2v1h-2zM21 14h2v1h-2zM24 14h3v1h-3zM28 14h1v1h-1zM0 15h1v1h-1zM2 15h1v1h-1zM7 15h1v1h-1zM9 15h1v1h-1zM11 15h1v1h-1zM13 15h1v1h-1zM16 15h2v1h-2zM20 15h3v1h-3zM25 15h1v1h-1zM27 15h1v1h-1zM0 16h2v1h-2zM4 16h1v1h-1zM6 16h1v1h-1zM10 16h1v1h-1zM14 16h2v1h-2zM18 16h1v1h-1zM21 16h3v1h-3zM25 16h2v1h-2zM0 17h1v1h-1zM2 17h1v1h-1zM4 17h4v1h-4zM9 17h2v1h-2zM12 17h1v1h-1zM14 17h1v1h-1zM16 17h1v1h-1zM18 17h1v1h-1zM21 17h1v1h-1zM25 17h1v1h-1zM28 17h1v1h-1zM0 18h2v1h-2zM6 18h4v1h-4zM13 18h1v1h-1zM15 18h1v1h-1zM18 18h2v1h-2zM21 18h1v1h-1zM23 18h1v1h-1zM25 18h2v1h-2zM28 18h1v1h-1zM0 19h1v1h-1zM3 19h1v1h-1zM5 19h2v1h-2zM8 19h1v1h-1zM11 19h1v1h-1zM13 19h1v1h-1zM16 19h1v1h-1zM20 19h1v1h-1zM24 19h2v1h-2zM27 19h1v1h-1zM1 20h2v1h-2zM5 20h1v1h-1zM8 20h1v1h-1zM10 20h2v1h-2zM13 20h1v1h-1zM16 20h4v1h-4zM22 20h1v1h-1zM24 20h2v1h-2zM28 20h1v1h-1zM8 21h2v1h-2zM11 21h2v1h-2zM14 21h1v1h-1zM16 21h1v1h-1zM18 21h4v1h-4zM24 21h2v1h-2zM9 22h2v1h-2zM12 22h1v1h-1zM14 22h3v1h-3zM18 22h1v1h-1zM22 22h1v1h-1zM24 22h1v1h-1zM28 22h1v1h-1zM9 23h1v1h-1zM12 23h1v1h-1zM15 23h1v1h-1zM17 23h2v1h-2zM20 23h1v1h-1zM23 23h1v1h-1zM27 23h1v1h-1zM9 24h1v1h-1zM11 24h2v1h-2zM15 24h1v1h-1zM18 24h1v1h-1zM20 24h1v1h-1zM24 24h1v1h-1zM28 24h1v1h-1zM9 25h6v1h-6zM17 25h1v1h-1zM20 25h1v1h-1zM23 25h2v1h-2zM27 25h1v1h-1zM8 26h1v1h-1zM10 26h3v1h-3zM14 26h1v1h-1zM16 26h3v1h-3zM20 26h4v1h-4zM25 26h2v1h-2zM28 26h1v1h-1zM9 27h1v1h-1zM11 27h2v1h-2zM14 27h2v1h-2zM17 27h1v1h-1zM19 27h3v1h-3zM23 27h1v1h-1zM25 27h1v1h-1zM27 27h2v1h-2zM8 28h1v1h-1zM11 28h2v1h-2zM15 28h7v1h-7zM24 28h1v1h-1zM26 28h1v1h-1z" fill="#000"/><rect x="0" y="0" width="7" height="7" fill="#000"/><rect x="1" y="1" width="5" height="5" fill="#fff"/><rect x="2" y="2" width="3" height="3" fill="#000"/><rect x="22" y="0" width="7" height="7" fill="#000"/><rect x="23" y="1" width="5" height="5" fill="#fff"/><rect x="24" y="2" width="3" height="3" fill="#000"/><rect x="0" y="22" width="7" height="7" fill="#000"/><rect x="1" y="23" width="5" height="5" fill="#fff"/><rect x="2" y="24" width="3" height="3" fill="#000"/></svg></div><div class="c g" style="left:1411px;top:35px">显示</div><div class="btn be" style="top:26px">编辑</div><div class="btn bd" style="top:26px">删除</div></div>
<div class="row u"><div class="ck" style="top:36px"></div><div class="inp" style="top:32px">0</div><div class="c g" style="left:129px;top:35px"><span style="letter-spacing:-.3px">USDT</span>扫码</div><div class="c" style="left:242px;top:35px"><span style="letter-spacing:-0.2px">USDT-TRC20</span></div><div class="c" style="left:464px;top:35px">简体中文（CNY）</div><div class="c" style="left:633px;top:35px">7.1373</div><div class="abs" style="left:818px;top:19px;width:50px;height:50px"><svg width="50" height="50" viewBox="0 0 50 50"><defs><linearGradient id="ugr4" x1=".2" y1="0" x2=".8" y2="1"><stop offset="0" stop-color="#58b69e"/><stop offset=".5" stop-color="#46a48d"/><stop offset="1" stop-color="#36897a"/></linearGradient><linearGradient id="udr4" x1="0" y1="0" x2="0" y2="1"><stop offset="0" stop-color="#3b907b"/><stop offset="1" stop-color="#4fae96"/></linearGradient><linearGradient id="usr4" x1="0" y1="0" x2="0" y2="1"><stop offset="0" stop-color="#2d7f6b"/><stop offset=".55" stop-color="#3f9a84"/><stop offset="1" stop-color="#74cdb6"/></linearGradient></defs><circle cx="25" cy="25" r="25" fill="url(#ugr4)"/><circle cx="25" cy="25" r="19" fill="url(#udr4)" stroke="url(#usr4)" stroke-width="1.800"/><path d="M14.100 13.300h22v6.400h-6.500v20.500h-7.200v-20.500h-8.300z" fill="#fff"/><ellipse cx="25.600" cy="25" rx="14.300" ry="2.900" fill="none" stroke="#fff" stroke-width="1.300"/><path d="M22.400 19h7.200v8.500h-7.200z" fill="#fff"/><circle cx="42.300" cy="42.200" r="7.200" fill="#ee3a2e"/><circle cx="42.300" cy="42.200" r="3.600" fill="#ff8a7a" opacity=".8"/></svg></div><div class="c" style="left:930px;top:10px">地址：<span style="letter-spacing:0.2px">TH3AWbzELQQiRSh3vX5e3QwapKkUwvzipk</span></div><div class="abs" style="left:930px;top:28px;width:50px;height:50px;padding:4.250px"><svg width="41.5" height="41.5" viewBox="0 0 29 29" style="display:block"><path d="M8 0h1v1h-1zM11 0h1v1h-1zM13 0h1v1h-1zM16 0h2v1h-2zM19 0h1v1h-1zM8 1h1v1h-1zM11 1h1v1h-1zM14 1h2v1h-2zM18 1h2v1h-2zM8 2h2v1h-2zM11 2h4v1h-4zM16 2h2v1h-2zM19 2h1v1h-1zM8 3h1v1h-1zM11 3h2v1h-2zM16 3h1v1h-1zM19 3h1v1h-1zM10 4h1v1h-1zM12 4h2v1h-2zM15 4h2v1h-2zM20 4h1v1h-1zM8 5h1v1h-1zM10 5h1v1h-1zM12 5h3v1h-3zM17 5h1v1h-1zM19 5h1v1h-1zM10 6h1v1h-1zM12 6h1v1h-1zM15 6h1v1h-1zM17 6h1v1h-1zM20 6h1v1h-1zM12 7h1v1h-1zM14 7h2v1h-2zM17 7h2v1h-2zM20 7h1v1h-1zM0 8h1v1h-1zM3 8h1v1h-1zM5 8h3v1h-3zM13 8h1v1h-1zM16 8h3v1h-3zM20 8h2v1h-2zM23 8h3v1h-3zM27 8h2v1h-2zM1 9h2v1h-2zM4 9h1v1h-1zM6 9h3v1h-3zM10 9h2v1h-2zM14 9h3v1h-3zM18 9h1v1h-1zM21 9h2v1h-2zM25 9h2v1h-2zM28 9h1v1h-1zM0 10h2v1h-2zM3 10h2v1h-2zM7 10h1v1h-1zM9 10h1v1h-1zM12 10h3v1h-3zM16 10h1v1h-1zM19 10h2v1h-2zM24 10h1v1h-1zM26 10h2v1h-2zM0 11h3v1h-3zM4 11h1v1h-1zM6 11h1v1h-1zM9 11h3v1h-3zM14 11h2v1h-2zM19 11h1v1h-1zM22 11h1v1h-1zM24 11h1v1h-1zM26 11h2v1h-2zM0 12h1v1h-1zM2 12h1v1h-1zM4 12h3v1h-3zM8 12h1v1h-1zM11 12h1v1h-1zM13 12h3v1h-3zM19 12h1v1h-1zM22 12h1v1h-1zM24 12h3v1h-3zM28 12h1v1h-1zM1 13h2v1h-2zM5 13h1v1h-1zM7 13h2v1h-2zM10 13h2v1h-2zM13 13h4v1h-4zM18 13h1v1h-1zM20 13h1v1h-1zM23 13h2v1h-2zM26 13h1v1h-1zM28 13h1v1h-1zM0 14h1v1h-1zM2 14h1v1h-1zM4 14h3v1h-3zM10 14h2v1h-2zM14 14h1v1h-1zM17 14h1v1h-1zM19 14h4v1h-4zM24 14h1v1h-1zM28 14h1v1h-1zM0 15h3v1h-3zM5 15h2v1h-2zM8 15h1v1h-1zM10 15h4v1h-4zM15 15h2v1h-2zM18 15h1v1h-1zM20 15h1v1h-1zM22 15h1v1h-1zM25 15h1v1h-1zM27 15h1v1h-1zM2 16h2v1h-2zM6 16h1v1h-1zM8 16h1v1h-1zM10 16h2v1h-2zM18 16h1v1h-1zM20 16h1v1h-1zM23 16h2v1h-2zM27 16h1v1h-1zM1 17h1v1h-1zM3 17h3v1h-3zM7 17h1v1h-1zM9 17h1v1h-1zM11 17h3v1h-3zM15 17h1v1h-1zM17 17h3v1h-3zM21 17h1v1h-1zM23 17h1v1h-1zM26 17h1v1h-1zM28 17h1v1h-1zM0 18h1v1h-1zM2 18h1v1h-1zM5 18h1v1h-1zM7 18h2v1h-2zM11 18h1v1h-1zM14 18h1v1h-1zM17 18h1v1h-1zM20 18h1v1h-1zM24 18h4v1h-4zM1 19h1v1h-1zM4 19h1v1h-1zM6 19h1v1h-1zM8 19h1v1h-1zM12 19h1v1h-1zM15 19h1v1h-1zM20 19h1v1h-1zM23 19h1v1h-1zM25 19h4v1h-4zM2 20h1v1h-1zM4 20h4v1h-4zM9 20h2v1h-2zM12 20h1v1h-1zM14 20h1v1h-1zM16 20h2v1h-2zM19 20h1v1h-1zM21 20h1v1h-1zM26 20h1v1h-1zM9 21h1v1h-1zM11 21h2v1h-2zM14 21h1v1h-1zM16 21h1v1h-1zM20 21h1v1h-1zM22 21h2v1h-2zM25 21h1v1h-1zM27 21h1v1h-1zM8 22h2v1h-2zM13 22h1v1h-1zM15 22h4v1h-4zM22 22h1v1h-1zM24 22h1v1h-1zM26 22h1v1h-1zM8 23h2v1h-2zM11 23h1v1h-1zM13 23h1v1h-1zM15 23h1v1h-1zM18 23h1v1h-1zM22 23h1v1h-1zM27 23h1v1h-1zM14 24h3v1h-3zM19 24h2v1h-2zM22 24h1v1h-1zM24 24h1v1h-1zM27 24h1v1h-1zM9 25h1v1h-1zM13 25h1v1h-1zM15 25h3v1h-3zM19 25h2v1h-2zM22 25h1v1h-1zM24 25h1v1h-1zM26 25h1v1h-1zM9 26h1v1h-1zM11 26h1v1h-1zM13 26h1v1h-1zM16 26h2v1h-2zM21 26h1v1h-1zM24 26h1v1h-1zM28 26h1v1h-1zM9 27h1v1h-1zM11 27h1v1h-1zM14 27h2v1h-2zM17 27h2v1h-2zM20 27h1v1h-1zM22 27h1v1h-1zM25 27h2v1h-2zM28 27h1v1h-1zM8 28h3v1h-3zM13 28h2v1h-2zM18 28h2v1h-2zM21 28h1v1h-1zM23 28h1v1h-1zM25 28h1v1h-1zM27 28h2v1h-2z" fill="#000"/><rect x="0" y="0" width="7" height="7" fill="#000"/><rect x="1" y="1" width="5" height="5" fill="#fff"/><rect x="2" y="2" width="3" height="3" fill="#000"/><rect x="22" y="0" width="7" height="7" fill="#000"/><rect x="23" y="1" width="5" height="5" fill="#fff"/><rect x="24" y="2" width="3" height="3" fill="#000"/><rect x="0" y="22" width="7" height="7" fill="#000"/><rect x="1" y="23" width="5" height="5" fill="#fff"/><rect x="2" y="24" width="3" height="3" fill="#000"/></svg></div><div class="c g" style="left:1411px;top:35px">显示</div><div class="btn be" style="top:26px">编辑</div><div class="btn bd" style="top:26px">删除</div></div>
<div class="row u"><div class="ck" style="top:36px"></div><div class="inp" style="top:32px">0</div><div class="c g" style="left:129px;top:35px"><span style="letter-spacing:-.3px">USDT</span>扫码</div><div class="c" style="left:242px;top:35px"><span style="letter-spacing:-0.2px">USDT-BEP20</span></div><div class="c" style="left:464px;top:35px">简体中文（CNY）</div><div class="c" style="left:633px;top:35px">7.1373</div><div class="abs" style="left:818px;top:19px;width:50px;height:50px"><svg width="50" height="50" viewBox="0 0 50 50"><defs><linearGradient id="ugy5" x1=".2" y1="0" x2=".8" y2="1"><stop offset="0" stop-color="#58b69e"/><stop offset=".5" stop-color="#46a48d"/><stop offset="1" stop-color="#36897a"/></linearGradient><linearGradient id="udy5" x1="0" y1="0" x2="0" y2="1"><stop offset="0" stop-color="#3b907b"/><stop offset="1" stop-color="#4fae96"/></linearGradient><linearGradient id="usy5" x1="0" y1="0" x2="0" y2="1"><stop offset="0" stop-color="#2d7f6b"/><stop offset=".55" stop-color="#3f9a84"/><stop offset="1" stop-color="#74cdb6"/></linearGradient></defs><circle cx="25" cy="25" r="25" fill="url(#ugy5)"/><circle cx="25" cy="25" r="19" fill="url(#udy5)" stroke="url(#usy5)" stroke-width="1.800"/><path d="M14.100 13.300h22v6.400h-6.500v20.500h-7.200v-20.500h-8.300z" fill="#fff"/><ellipse cx="25.600" cy="25" rx="14.300" ry="2.900" fill="none" stroke="#fff" stroke-width="1.300"/><path d="M22.400 19h7.200v8.500h-7.200z" fill="#fff"/><circle cx="42.300" cy="42.200" r="7.200" fill="#f2cf2c"/><circle cx="42.300" cy="42.200" r="3.600" fill="#fff3a0" opacity=".8"/></svg></div><div class="c" style="left:930px;top:10px">地址：<span style="letter-spacing:0.2px">0x5973685ECa71199bB744940eAA26299Fb78C6F55</span></div><div class="abs" style="left:930px;top:29px;width:50px;height:50px;padding:6.500px;background:#f8f8f5;border-radius:3px"><svg width="37" height="37" viewBox="0 0 33 33" style="display:block"><path d="M10 0h2v1h-2zM15 0h1v1h-1zM17 0h1v1h-1zM19 0h1v1h-1zM21 0h1v1h-1zM8 1h1v1h-1zM10 1h3v1h-3zM14 1h1v1h-1zM17 1h1v1h-1zM19 1h4v1h-4zM9 2h1v1h-1zM16 2h1v1h-1zM19 2h1v1h-1zM22 2h1v1h-1zM24 2h1v1h-1zM8 3h1v1h-1zM10 3h1v1h-1zM13 3h1v1h-1zM17 3h3v1h-3zM21 3h1v1h-1zM23 3h1v1h-1zM8 4h1v1h-1zM11 4h1v1h-1zM14 4h3v1h-3zM20 4h1v1h-1zM24 4h1v1h-1zM8 5h1v1h-1zM10 5h2v1h-2zM13 5h1v1h-1zM16 5h2v1h-2zM19 5h1v1h-1zM21 5h1v1h-1zM23 5h1v1h-1zM8 6h1v1h-1zM10 6h1v1h-1zM12 6h2v1h-2zM15 6h2v1h-2zM18 6h2v1h-2zM21 6h3v1h-3zM9 7h3v1h-3zM19 7h2v1h-2zM22 7h2v1h-2zM1 8h1v1h-1zM3 8h1v1h-1zM5 8h1v1h-1zM7 8h1v1h-1zM9 8h2v1h-2zM12 8h5v1h-5zM18 8h1v1h-1zM22 8h1v1h-1zM24 8h1v1h-1zM29 8h1v1h-1zM31 8h2v1h-2zM0 9h1v1h-1zM2 9h1v1h-1zM4 9h5v1h-5zM10 9h2v1h-2zM13 9h1v1h-1zM17 9h1v1h-1zM19 9h2v1h-2zM22 9h3v1h-3zM26 9h1v1h-1zM29 9h2v1h-2zM32 9h1v1h-1zM0 10h1v1h-1zM2 10h2v1h-2zM6 10h1v1h-1zM8 10h1v1h-1zM10 10h1v1h-1zM12 10h2v1h-2zM16 10h1v1h-1zM18 10h1v1h-1zM20 10h1v1h-1zM23 10h4v1h-4zM31 10h1v1h-1zM2 11h1v1h-1zM4 11h1v1h-1zM6 11h1v1h-1zM8 11h1v1h-1zM13 11h2v1h-2zM16 11h1v1h-1zM20 11h1v1h-1zM22 11h1v1h-1zM25 11h1v1h-1zM27 11h2v1h-2zM32 11h1v1h-1zM0 12h2v1h-2zM4 12h1v1h-1zM6 12h1v1h-1zM10 12h1v1h-1zM13 12h1v1h-1zM15 12h1v1h-1zM17 12h1v1h-1zM20 12h2v1h-2zM23 12h1v1h-1zM26 12h1v1h-1zM28 12h1v1h-1zM0 13h1v1h-1zM2 13h1v1h-1zM7 13h1v1h-1zM9 13h1v1h-1zM13 13h1v1h-1zM19 13h1v1h-1zM22 13h1v1h-1zM25 13h1v1h-1zM28 13h1v1h-1zM30 13h2v1h-2zM0 14h1v1h-1zM2 14h2v1h-2zM5 14h2v1h-2zM8 14h2v1h-2zM14 14h1v1h-1zM16 14h2v1h-2zM19 14h2v1h-2zM22 14h1v1h-1zM25 14h1v1h-1zM29 14h2v1h-2zM32 14h1v1h-1zM0 15h2v1h-2zM4 15h1v1h-1zM6 15h1v1h-1zM9 15h1v1h-1zM11 15h1v1h-1zM14 15h1v1h-1zM16 15h1v1h-1zM20 15h1v1h-1zM22 15h1v1h-1zM24 15h1v1h-1zM29 15h2v1h-2zM32 15h1v1h-1zM0 16h1v1h-1zM2 16h1v1h-1zM4 16h1v1h-1zM6 16h2v1h-2zM9 16h1v1h-1zM11 16h1v1h-1zM14 16h1v1h-1zM17 16h4v1h-4zM22 16h1v1h-1zM25 16h1v1h-1zM28 16h1v1h-1zM30 16h1v1h-1zM0 17h1v1h-1zM9 17h1v1h-1zM12 17h1v1h-1zM14 17h1v1h-1zM16 17h1v1h-1zM19 17h1v1h-1zM21 17h2v1h-2zM24 17h1v1h-1zM28 17h1v1h-1zM30 17h1v1h-1zM32 17h1v1h-1zM0 18h1v1h-1zM2 18h2v1h-2zM5 18h4v1h-4zM10 18h4v1h-4zM15 18h1v1h-1zM18 18h2v1h-2zM21 18h1v1h-1zM23 18h1v1h-1zM26 18h1v1h-1zM28 18h1v1h-1zM31 18h1v1h-1zM0 19h2v1h-2zM3 19h1v1h-1zM5 19h1v1h-1zM9 19h1v1h-1zM11 19h3v1h-3zM15 19h1v1h-1zM19 19h2v1h-2zM22 19h2v1h-2zM25 19h2v1h-2zM28 19h1v1h-1zM31 19h1v1h-1zM0 20h1v1h-1zM2 20h2v1h-2zM5 20h2v1h-2zM9 20h1v1h-1zM12 20h1v1h-1zM14 20h6v1h-6zM25 20h1v1h-1zM27 20h2v1h-2zM31 20h1v1h-1zM0 21h1v1h-1zM2 21h1v1h-1zM6 21h1v1h-1zM8 21h1v1h-1zM11 21h1v1h-1zM15 21h1v1h-1zM17 21h2v1h-2zM24 21h2v1h-2zM29 21h4v1h-4zM1 22h2v1h-2zM6 22h3v1h-3zM11 22h1v1h-1zM13 22h1v1h-1zM15 22h1v1h-1zM17 22h1v1h-1zM19 22h1v1h-1zM21 22h1v1h-1zM23 22h2v1h-2zM26 22h1v1h-1zM29 22h1v1h-1zM0 23h1v1h-1zM2 23h1v1h-1zM4 23h2v1h-2zM7 23h1v1h-1zM9 23h3v1h-3zM14 23h1v1h-1zM19 23h2v1h-2zM22 23h2v1h-2zM25 23h4v1h-4zM30 23h1v1h-1zM32 23h1v1h-1zM1 24h1v1h-1zM3 24h2v1h-2zM6 24h2v1h-2zM11 24h1v1h-1zM14 24h2v1h-2zM18 24h1v1h-1zM21 24h1v1h-1zM23 24h4v1h-4zM28 24h1v1h-1zM30 24h1v1h-1zM8 25h1v1h-1zM10 25h3v1h-3zM15 25h1v1h-1zM18 25h1v1h-1zM20 25h1v1h-1zM22 25h1v1h-1zM24 25h1v1h-1zM26 25h1v1h-1zM29 25h2v1h-2zM32 25h1v1h-1zM8 26h2v1h-2zM11 26h1v1h-1zM14 26h1v1h-1zM16 26h1v1h-1zM18 26h3v1h-3zM22 26h1v1h-1zM24 26h2v1h-2zM27 26h2v1h-2zM30 26h1v1h-1zM10 27h1v1h-1zM12 27h2v1h-2zM15 27h1v1h-1zM20 27h1v1h-1zM22 27h1v1h-1zM24 27h1v1h-1zM26 27h2v1h-2zM32 27h1v1h-1zM9 28h2v1h-2zM13 28h1v1h-1zM15 28h1v1h-1zM17 28h4v1h-4zM22 28h2v1h-2zM25 28h1v1h-1zM27 28h1v1h-1zM30 28h1v1h-1zM32 28h1v1h-1zM8 29h1v1h-1zM10 29h1v1h-1zM12 29h1v1h-1zM17 29h1v1h-1zM19 29h1v1h-1zM21 29h1v1h-1zM25 29h2v1h-2zM28 29h1v1h-1zM30 29h2v1h-2zM11 30h2v1h-2zM15 30h1v1h-1zM18 30h1v1h-1zM20 30h1v1h-1zM22 30h1v1h-1zM24 30h1v1h-1zM26 30h1v1h-1zM29 30h1v1h-1zM10 31h1v1h-1zM13 31h1v1h-1zM16 31h1v1h-1zM20 31h1v1h-1zM22 31h2v1h-2zM26 31h1v1h-1zM30 31h1v1h-1zM32 31h1v1h-1zM8 32h1v1h-1zM14 32h2v1h-2zM17 32h1v1h-1zM19 32h1v1h-1zM22 32h1v1h-1zM24 32h2v1h-2zM27 32h1v1h-1zM29 32h4v1h-4z" fill="#2a2a2a"/><rect x="0" y="0" width="7" height="7" fill="#2a2a2a"/><rect x="1" y="1" width="5" height="5" fill="#fff"/><rect x="2" y="2" width="3" height="3" fill="#2a2a2a"/><rect x="26" y="0" width="7" height="7" fill="#2a2a2a"/><rect x="27" y="1" width="5" height="5" fill="#fff"/><rect x="28" y="2" width="3" height="3" fill="#2a2a2a"/><rect x="0" y="26" width="7" height="7" fill="#2a2a2a"/><rect x="1" y="27" width="5" height="5" fill="#fff"/><rect x="2" y="28" width="3" height="3" fill="#2a2a2a"/></svg><svg class="abs" style="left:0;top:0" width="50" height="50" viewBox="0 0 50 50"><path d="M.5 5V3a2.500 2.500 0 0 1 2.500-2.500h2M45 .5h2a2.500 2.500 0 0 1 2.500 2.500v2M49.500 45v2a2.500 2.500 0 0 1-2.500 2.500h-2M5 49.500H3a2.500 2.500 0 0 1-2.500-2.500v-2" stroke="#cfe6f2" stroke-width="1" fill="none"/></svg></div><div class="c g" style="left:1411px;top:35px">显示</div><div class="btn be" style="top:26px">编辑</div><div class="btn bd" style="top:26px">删除</div></div>
<div class="row u"><div class="ck" style="top:36px"></div><div class="inp" style="top:32px">0</div><div class="c g" style="left:129px;top:35px"><span style="letter-spacing:-.3px">USDT</span>扫码</div><div class="c" style="left:242px;top:35px"><span style="letter-spacing:-0.2px">USDT-ERC20</span></div><div class="c" style="left:464px;top:35px">简体中文（CNY）</div><div class="c" style="left:633px;top:35px">7.1373</div><div class="abs" style="left:818px;top:19px;width:50px;height:50px"><svg width="50" height="50" viewBox="0 0 50 50"><defs><linearGradient id="ugo6" x1=".2" y1="0" x2=".8" y2="1"><stop offset="0" stop-color="#58b69e"/><stop offset=".5" stop-color="#46a48d"/><stop offset="1" stop-color="#36897a"/></linearGradient><linearGradient id="udo6" x1="0" y1="0" x2="0" y2="1"><stop offset="0" stop-color="#3b907b"/><stop offset="1" stop-color="#4fae96"/></linearGradient><linearGradient id="uso6" x1="0" y1="0" x2="0" y2="1"><stop offset="0" stop-color="#2d7f6b"/><stop offset=".55" stop-color="#3f9a84"/><stop offset="1" stop-color="#74cdb6"/></linearGradient></defs><circle cx="25" cy="25" r="25" fill="url(#ugo6)"/><circle cx="25" cy="25" r="19" fill="url(#udo6)" stroke="url(#uso6)" stroke-width="1.800"/><path d="M14.100 13.300h22v6.400h-6.500v20.500h-7.200v-20.500h-8.300z" fill="#fff"/><ellipse cx="25.600" cy="25" rx="14.300" ry="2.900" fill="none" stroke="#fff" stroke-width="1.300"/><path d="M22.400 19h7.200v8.500h-7.200z" fill="#fff"/><circle cx="42.300" cy="42.200" r="7.200" fill="#6e3a12"/><circle cx="42.300" cy="42.200" r="3.600" fill="#e58a1c" opacity=".8"/></svg></div><div class="c" style="left:930px;top:10px">地址：<span style="letter-spacing:0.09px">0x2097Ec793E2678358292F31F0E6f04aB872B7428</span></div><div class="abs" style="left:930px;top:28px;width:50px;height:50px;padding:4.250px"><svg width="41.5" height="41.5" viewBox="0 0 29 29" style="display:block"><path d="M8 0h1v1h-1zM10 0h1v1h-1zM13 0h2v1h-2zM16 0h2v1h-2zM19 0h1v1h-1zM8 1h1v1h-1zM10 1h1v1h-1zM13 1h1v1h-1zM16 1h1v1h-1zM18 1h3v1h-3zM8 2h1v1h-1zM13 2h1v1h-1zM15 2h1v1h-1zM18 2h3v1h-3zM8 3h1v1h-1zM10 3h1v1h-1zM12 3h1v1h-1zM14 3h1v1h-1zM9 4h1v1h-1zM13 4h1v1h-1zM15 4h1v1h-1zM17 4h3v1h-3zM9 5h1v1h-1zM11 5h3v1h-3zM16 5h1v1h-1zM18 5h1v1h-1zM20 5h1v1h-1zM9 6h1v1h-1zM11 6h2v1h-2zM14 6h2v1h-2zM17 6h3v1h-3zM8 7h1v1h-1zM11 7h1v1h-1zM13 7h1v1h-1zM15 7h1v1h-1zM19 7h1v1h-1zM1 8h2v1h-2zM4 8h1v1h-1zM6 8h1v1h-1zM8 8h2v1h-2zM12 8h1v1h-1zM14 8h1v1h-1zM16 8h1v1h-1zM19 8h2v1h-2zM23 8h1v1h-1zM25 8h2v1h-2zM28 8h1v1h-1zM0 9h1v1h-1zM2 9h1v1h-1zM5 9h1v1h-1zM8 9h2v1h-2zM11 9h2v1h-2zM15 9h3v1h-3zM19 9h1v1h-1zM21 9h2v1h-2zM25 9h3v1h-3zM0 10h1v1h-1zM3 10h2v1h-2zM8 10h3v1h-3zM12 10h2v1h-2zM15 10h1v1h-1zM18 10h2v1h-2zM23 10h1v1h-1zM26 10h1v1h-1zM1 11h5v1h-5zM7 11h1v1h-1zM9 11h1v1h-1zM15 11h2v1h-2zM18 11h2v1h-2zM21 11h1v1h-1zM24 11h3v1h-3zM28 11h1v1h-1zM1 12h2v1h-2zM5 12h1v1h-1zM10 12h1v1h-1zM13 12h3v1h-3zM17 12h1v1h-1zM20 12h5v1h-5zM27 12h1v1h-1zM0 13h2v1h-2zM4 13h1v1h-1zM6 13h3v1h-3zM11 13h3v1h-3zM15 13h1v1h-1zM17 13h1v1h-1zM20 13h1v1h-1zM22 13h1v1h-1zM24 13h1v1h-1zM26 13h2v1h-2zM1 14h1v1h-1zM3 14h1v1h-1zM6 14h1v1h-1zM9 14h1v1h-1zM11 14h1v1h-1zM18 14h2v1h-2zM21 14h2v1h-2zM24 14h3v1h-3zM28 14h1v1h-1zM0 15h1v1h-1zM2 15h1v1h-1zM7 15h1v1h-1zM9 15h1v1h-1zM11 15h1v1h-1zM13 15h1v1h-1zM16 15h2v1h-2zM20 15h3v1h-3zM25 15h1v1h-1zM27 15h1v1h-1zM0 16h2v1h-2zM4 16h1v1h-1zM6 16h1v1h-1zM10 16h1v1h-1zM14 16h2v1h-2zM18 16h1v1h-1zM21 16h3v1h-3zM25 16h2v1h-2zM0 17h1v1h-1zM2 17h1v1h-1zM4 17h4v1h-4zM9 17h2v1h-2zM12 17h1v1h-1zM14 17h1v1h-1zM16 17h1v1h-1zM18 17h1v1h-1zM21 17h1v1h-1zM25 17h1v1h-1zM28 17h1v1h-1zM0 18h2v1h-2zM6 18h4v1h-4zM13 18h1v1h-1zM15 18h1v1h-1zM18 18h2v1h-2zM21 18h1v1h-1zM23 18h1v1h-1zM25 18h2v1h-2zM28 18h1v1h-1zM0 19h1v1h-1zM3 19h1v1h-1zM5 19h2v1h-2zM8 19h1v1h-1zM11 19h1v1h-1zM13 19h1v1h-1zM16 19h1v1h-1zM20 19h1v1h-1zM24 19h2v1h-2zM27 19h1v1h-1zM1 20h2v1h-2zM5 20h1v1h-1zM8 20h1v1h-1zM10 20h2v1h-2zM13 20h1v1h-1zM16 20h4v1h-4zM22 20h1v1h-1zM24 20h2v1h-2zM28 20h1v1h-1zM8 21h2v1h-2zM11 21h2v1h-2zM14 21h1v1h-1zM16 21h1v1h-1zM18 21h4v1h-4zM24 21h2v1h-2zM9 22h2v1h-2zM12 22h1v1h-1zM14 22h3v1h-3zM18 22h1v1h-1zM22 22h1v1h-1zM24 22h1v1h-1zM28 22h1v1h-1zM9 23h1v1h-1zM12 23h1v1h-1zM15 23h1v1h-1zM17 23h2v1h-2zM20 23h1v1h-1zM23 23h1v1h-1zM27 23h1v1h-1zM9 24h1v1h-1zM11 24h2v1h-2zM15 24h1v1h-1zM18 24h1v1h-1zM20 24h1v1h-1zM24 24h1v1h-1zM28 24h1v1h-1zM9 25h6v1h-6zM17 25h1v1h-1zM20 25h1v1h-1zM23 25h2v1h-2zM27 25h1v1h-1zM8 26h1v1h-1zM10 26h3v1h-3zM14 26h1v1h-1zM16 26h3v1h-3zM20 26h4v1h-4zM25 26h2v1h-2zM28 26h1v1h-1zM9 27h1v1h-1zM11 27h2v1h-2zM14 27h2v1h-2zM17 27h1v1h-1zM19 27h3v1h-3zM23 27h1v1h-1zM25 27h1v1h-1zM27 27h2v1h-2zM8 28h1v1h-1zM11 28h2v1h-2zM15 28h7v1h-7zM24 28h1v1h-1zM26 28h1v1h-1z" fill="#000"/><rect x="0" y="0" width="7" height="7" fill="#000"/><rect x="1" y="1" width="5" height="5" fill="#fff"/><rect x="2" y="2" width="3" height="3" fill="#000"/><rect x="22" y="0" width="7" height="7" fill="#000"/><rect x="23" y="1" width="5" height="5" fill="#fff"/><rect x="24" y="2" width="3" height="3" fill="#000"/><rect x="0" y="22" width="7" height="7" fill="#000"/><rect x="1" y="23" width="5" height="5" fill="#fff"/><rect x="2" y="24" width="3" height="3" fill="#000"/></svg></div><div class="c g" style="left:1411px;top:35px">显示</div><div class="btn be" style="top:26px">编辑</div><div class="btn bd" style="top:26px">删除</div></div>
</div>
</div>

<div id="vs"><i></i></div>
<div id="bell"><svg width="52" height="52" viewBox="0 0 52 52"><path d="M25.800 10.600c1 0 1.900.7 2.100 1.700 4.300.9 7 4.300 7.400 9l1.300 11c.2 1.500 1 2.300 2 3.300v.6H13v-.6c1-1 1.800-1.800 2-3.300l1.300-11c.4-4.700 3.100-8.100 7.400-9 .2-1 1.100-1.700 2.100-1.700zM22.200 36.100h7.200v2a3.600 3.300 0 0 1-7.200 0z" fill="#fff"/><path d="M14.800 15.800L37.200 38.200" stroke="#19a092" stroke-width="2.300"/><path d="M14.300 13.300L17.600 16.600" stroke="#fff" stroke-width="1.900"/></svg></div>
</body>
</html>
